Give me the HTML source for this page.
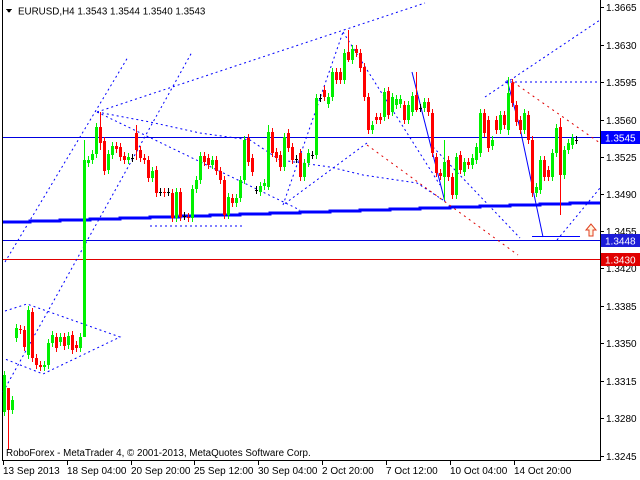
<!DOCTYPE html>
<html><head><meta charset="utf-8"><style>
html,body{margin:0;padding:0;background:#fff;width:640px;height:480px;overflow:hidden}
svg{display:block}
text{font-family:"Liberation Sans","DejaVu Sans",sans-serif;font-size:10px;fill:#000}
</style></head><body>
<svg id="s" width="640" height="480" viewBox="0 0 640 480" xmlns="http://www.w3.org/2000/svg" shape-rendering="crispEdges">
<rect width="640" height="480" fill="#fff"/>
<line x1="2.5" y1="0" x2="2.5" y2="460" stroke="#000"/>
<line x1="600.5" y1="0" x2="600.5" y2="461" stroke="#000"/>
<line x1="2" y1="460.5" x2="601" y2="460.5" stroke="#000"/>
<line x1="3" y1="137.5" x2="600" y2="137.5" stroke="#0000e0"/>
<line x1="3" y1="240.5" x2="600" y2="240.5" stroke="#0000e0"/>
<line x1="3" y1="259.5" x2="600" y2="259.5" stroke="#e00000"/>
<polyline points="3,222 30,222 30,221 60,221 60,220 90,220 90,219 120,219 120,218 150,218 150,217 180,217 180,216 210,216 210,215 240,215 240,214 270,214 270,213 300,213 300,212 330,212 330,211 360,211 360,210 390,210 390,209 420,209 420,208 450,208 450,207 480,207 480,206 510,206 510,205 540,205 540,204 570,204 570,203 600,203" fill="none" stroke="#0000ff" stroke-width="3"/>
<g fill="none" stroke="#0000ff" stroke-width="1" stroke-dasharray="2,3" shape-rendering="auto">
<line x1="5" y1="262" x2="128" y2="57"/>
<line x1="3" y1="392" x2="192" y2="52"/>
<line x1="97" y1="112" x2="425" y2="3"/>
<polyline points="97,112 150,122 200,133 250,140 280,160 330,167 363,175 417,183 443,200"/>
<line x1="283" y1="205" x2="343" y2="32"/>
<line x1="343" y1="32" x2="440" y2="185"/>
<line x1="367" y1="143" x2="283" y2="205"/>
<line x1="433" y1="147" x2="520" y2="238"/>
<line x1="485" y1="97" x2="600" y2="20"/>
<line x1="505" y1="82" x2="600" y2="82"/>
<line x1="557" y1="240" x2="600" y2="188"/>
<line x1="150" y1="226" x2="245" y2="226"/>
<polyline points="5,311 27,304 120,337 43,374 5,359"/>
<line x1="97" y1="112" x2="300" y2="210"/>
</g>
<g fill="none" stroke="#0000ff" stroke-width="1" shape-rendering="auto">
<line x1="412" y1="72" x2="445" y2="202"/>
<polyline points="507,80 520,128 543,237"/>
<line x1="532" y1="236.5" x2="580" y2="236.5"/>
</g>
<g fill="none" stroke="#e00000" stroke-width="1" stroke-dasharray="2,4" shape-rendering="auto">
<line x1="367" y1="145" x2="518" y2="255"/>
<line x1="513" y1="82" x2="600" y2="143"/>
</g>
<g id="c"></g>
<path d="M591,224 L586,230 L589,230 L589,236 L593,236 L593,230 L596,230 Z" fill="#fff5e0" stroke="#e04020" stroke-width="1" shape-rendering="auto"/>
<g stroke="#000">
<line x1="600" y1="7.5" x2="604" y2="7.5"/><line x1="600" y1="45.5" x2="604" y2="45.5"/><line x1="600" y1="82.5" x2="604" y2="82.5"/><line x1="600" y1="120.5" x2="604" y2="120.5"/><line x1="600" y1="157.5" x2="604" y2="157.5"/><line x1="600" y1="194.5" x2="604" y2="194.5"/><line x1="600" y1="231.5" x2="604" y2="231.5"/><line x1="600" y1="268.5" x2="604" y2="268.5"/><line x1="600" y1="306.5" x2="604" y2="306.5"/><line x1="600" y1="343.5" x2="604" y2="343.5"/><line x1="600" y1="381.5" x2="604" y2="381.5"/><line x1="600" y1="418.5" x2="604" y2="418.5"/><line x1="600" y1="456.5" x2="604" y2="456.5"/>
<line x1="3.5" y1="460" x2="3.5" y2="465"/><line x1="67.5" y1="460" x2="67.5" y2="465"/><line x1="131.5" y1="460" x2="131.5" y2="465"/><line x1="194.5" y1="460" x2="194.5" y2="465"/><line x1="258.5" y1="460" x2="258.5" y2="465"/><line x1="322.5" y1="460" x2="322.5" y2="465"/><line x1="386.5" y1="460" x2="386.5" y2="465"/><line x1="450.5" y1="460" x2="450.5" y2="465"/><line x1="514.5" y1="460" x2="514.5" y2="465"/>
</g>
<g>
<text x="606" y="11">1.3665</text><text x="606" y="49">1.3630</text><text x="606" y="86">1.3595</text><text x="606" y="124">1.3560</text><text x="606" y="161">1.3525</text><text x="606" y="198">1.3490</text><text x="606" y="235">1.3455</text><text x="606" y="272">1.3420</text><text x="606" y="310">1.3385</text><text x="606" y="347">1.3350</text><text x="606" y="385">1.3315</text><text x="606" y="422">1.3280</text><text x="606" y="460">1.3245</text>
</g>
<rect x="601" y="131" width="39" height="13" fill="#0000ff"/><text x="605" y="141.5" style="fill:#fff">1.3545</text>
<rect x="601" y="234" width="39" height="13" fill="#1c1cd8"/><text x="605" y="244.5" style="fill:#fff">1.3448</text>
<rect x="601" y="253" width="39" height="13" fill="#e00000"/><text x="605" y="263.5" style="fill:#fff">1.3430</text>
<g style="font-size:9.6px">
<text x="3" y="474">13 Sep 2013</text><text x="67" y="474">18 Sep 04:00</text><text x="131" y="474">20 Sep 20:00</text><text x="194" y="474">25 Sep 12:00</text><text x="258" y="474">30 Sep 04:00</text><text x="322" y="474">2 Oct 20:00</text><text x="386" y="474">7 Oct 12:00</text><text x="450" y="474">10 Oct 04:00</text><text x="514" y="474">14 Oct 20:00</text>
</g>
<path d="M6,9 L12,9 L9,13 Z" fill="#000"/>
<text x="18" y="14.5" style="font-size:9.8px">EURUSD,H4  1.3543 1.3544 1.3540 1.3543</text>
<text x="6" y="456" style="font-size:9.8px">RoboForex - MetaTrader 4, © 2001-2013, MetaQuotes Software Corp.</text>
</svg>
<script>
var d=[[4,412,375],[8,388,410],[12,410,400],[16,338,328],[20,329,330],[24,330,347],[28,355,310],[32,312,358],[36,358,365],[40,365,367],[44,367,365],[48,365,343],[52,343,335],[56,337,348],[60,342,337],[64,337,346],[68,345,336],[72,335,350],[76,345,348],[80,348,337],[84,337,160],[88,163,160],[92,160,154],[96,154,127],[100,127,143],[104,141,171],[108,170,154],[112,155,146],[116,146,149],[120,147,157],[124,156,160],[128,160,157],[132,158,158],[136,133,150],[140,150,158],[144,158,160],[148,160,178],[152,178,171],[156,170,193],[160,192,192],[164,192,193],[168,192,192],[172,193,218],[176,218,192],[180,192,217],[184,216,216],[188,217,218],[192,218,189],[196,189,180],[200,180,156],[204,156,162],[208,158,165],[212,165,160],[216,160,171],[220,171,180],[224,180,215],[228,215,197],[232,198,203],[236,203,198],[240,198,180],[244,180,140],[248,138,162],[252,158,172],[256,190,190],[260,192,186],[264,186,183],[268,187,132],[272,132,153],[276,152,158],[280,155,167],[284,167,137],[288,133,148],[292,147,160],[296,159,159],[300,153,177],[304,177,163],[308,163,153],[312,155,155],[316,155,98],[320,98,98],[324,90,97],[328,104,97],[332,97,72],[336,72,80],[340,72,80],[344,80,53],[348,52,60],[352,60,49],[356,49,53],[360,53,68],[364,67,97],[368,97,130],[372,130,125],[376,117,120],[380,117,120],[384,117,92],[388,91,115],[392,112,97],[396,105,99],[400,104,99],[404,105,120],[408,120,105],[412,112,96],[416,95,110],[420,108,108],[424,108,102],[428,102,112],[432,113,153],[436,157,173],[440,173,176],[444,177,162],[448,160,177],[452,177,195],[456,195,157],[460,155,170],[464,172,162],[468,162,165],[472,165,158],[476,160,147],[480,153,113],[484,113,133],[488,120,148],[492,146,140],[496,120,130],[500,130,115],[504,115,125],[508,130,93],[512,83,103],[516,105,122],[520,120,130],[524,130,113],[528,115,140],[532,140,193],[536,193,187],[540,190,160],[544,160,177],[548,170,177],[552,177,153],[556,153,128],[560,127,175],[564,175,150],[568,150,143],[572,145,138],[576,140,140]];
var sp={8:[388,450],84:[140,337],100:[112,150],348:[30,62],416:[72,112],508:[77,135],560:[118,215],136:[125,160],444:[140,200],268:[125,190]};
var h='';
d.forEach(function(c){var x=c[0],o=c[1],cl=c[2],t=Math.min(o,cl),b=Math.max(o,cl);var hi=t-4,lo=b+4;if(sp[x]){hi=sp[x][0];lo=sp[x][1];}
if(o==cl){h+='<line x1="'+(x+.5)+'" y1="'+hi+'" x2="'+(x+.5)+'" y2="'+lo+'" stroke="#000"/><line x1="'+(x-1)+'" y1="'+(o+.5)+'" x2="'+(x+2)+'" y2="'+(o+.5)+'" stroke="#000"/>';return;}
var col=cl<o?'#00f000':'#ff0000';
h+='<line x1="'+(x+.5)+'" y1="'+hi+'" x2="'+(x+.5)+'" y2="'+lo+'" stroke="'+col+'"/><rect x="'+(x-1)+'" y="'+t+'" width="3" height="'+Math.max(1,b-t)+'" fill="'+col+'"/>';});
document.getElementById('c').innerHTML=h;
</script>
</body></html>
